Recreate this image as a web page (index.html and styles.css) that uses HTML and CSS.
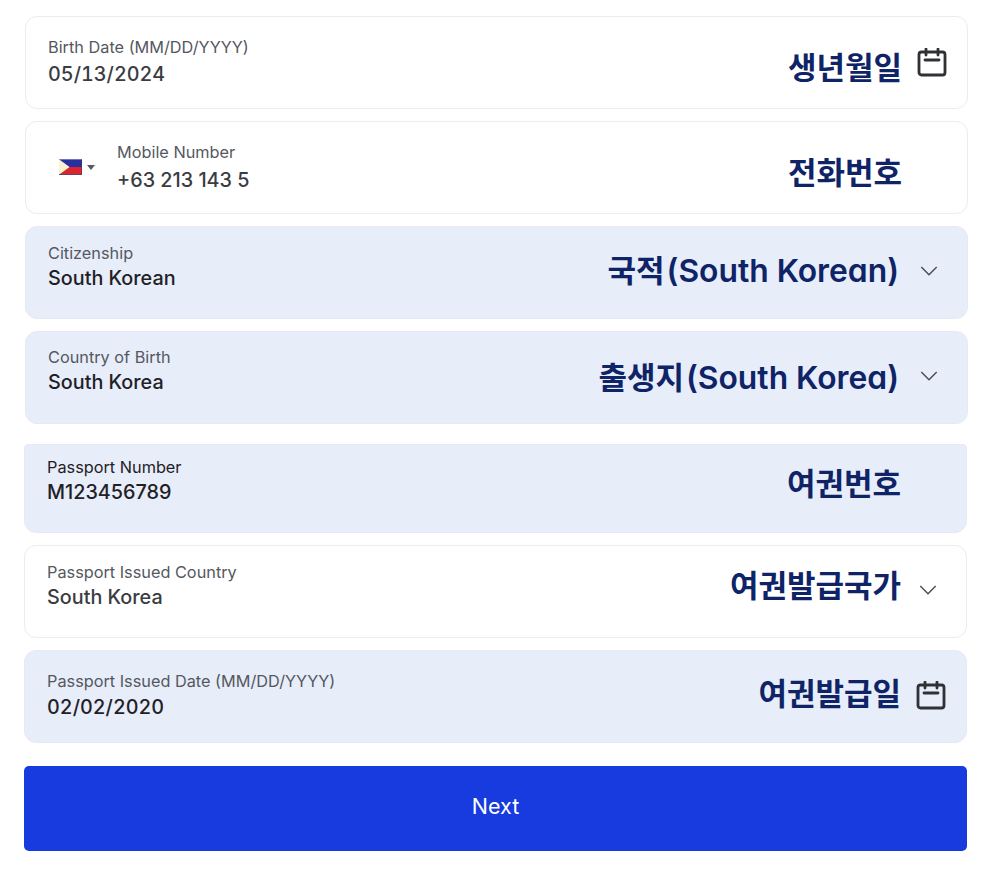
FILE: index.html
```html
<!DOCTYPE html>
<html lang="ko">
<head>
    <meta charset="UTF-8">
    <meta name="viewport" content="width=device-width, initial-scale=1.0">
    <title>Passenger details</title>
    <link rel="stylesheet" href="styles.css">
</head>

<body>
    <div class="wrap">
        <div class="group">
            <div class="field birth">
                <div class="info">
                    <span class="label">Birth Date (MM/DD/YYYY)</span>
                    <span class="value num">05/13/2024</span>
                </div>
                <span class="ko">생년월일</span>
                <div class="icon">
                    <svg class="cal" viewBox="0 0 30 30"><rect x="2" y="4" width="26" height="23" rx="2.5"/><path d="M9 1v6M21 1v6M8 12h14"/></svg>
                </div>
            </div>
            <div class="field phone">
                <div class="flag">
                    <svg class="ph" viewBox="0 0 24 16">
                        <rect width="24" height="8" fill="#2a2f9e"/>
                        <rect y="8" width="24" height="8" fill="#dc2430"/>
                        <path d="M0 0L11 8L0 16Z" fill="#f8f3d0"/>
                        <path d="M24 0V16H0" fill="none" stroke="#4a3a55" stroke-width="1"/>
                    </svg>
                    <span class="caret"></span>
                </div>
                <div class="info">
                    <span class="label">Mobile Number</span>
                    <span class="value">+63 213 143 5</span>
                </div>
                <span class="ko">전화번호</span>
                <div class="icon"></div>
            </div>
            <div class="field blue citizen">
                <div class="info">
                    <span class="label">Citizenship</span>
                    <span class="value dark">South Korean</span>
                </div>
                <span class="ko">국적<span class="latin">(South Korean)</span></span>
                <div class="icon">
                    <svg class="chev" viewBox="0 0 16 10"><path d="M1 1l7 7 7-7"/></svg>
                </div>
            </div>
            <div class="field blue country">
                <div class="info">
                    <span class="label">Country of Birth</span>
                    <span class="value dark">South Korea</span>
                </div>
                <span class="ko">출생지<span class="latin">(South Korea)</span></span>
                <div class="icon">
                    <svg class="chev" viewBox="0 0 16 10"><path d="M1 1l7 7 7-7"/></svg>
                </div>
            </div>
        </div>

        <div class="group lower">
            <div class="field blue passport">
                <div class="info">
                    <span class="label dark">Passport Number</span>
                    <span class="value dark">M123456789</span>
                </div>
                <span class="ko">여권번호</span>
                <div class="icon"></div>
            </div>
            <div class="field issued-country">
                <div class="info">
                    <span class="label">Passport Issued Country</span>
                    <span class="value">South Korea</span>
                </div>
                <span class="ko">여권발급국가</span>
                <div class="icon">
                    <svg class="chev" viewBox="0 0 16 10"><path d="M1 1l7 7 7-7"/></svg>
                </div>
            </div>
            <div class="field blue issued-date">
                <div class="info">
                    <span class="label">Passport Issued Date (MM/DD/YYYY)</span>
                    <span class="value dark num">02/02/2020</span>
                </div>
                <span class="ko">여권발급일</span>
                <div class="icon">
                    <svg class="cal" viewBox="0 0 30 30"><rect x="2" y="4" width="26" height="23" rx="2.5"/><path d="M9 1v6M21 1v6M8 12h14"/></svg>
                </div>
            </div>
            <button class="next">Next</button>
        </div>
    </div>
</body>

</html>
```

FILE: styles.css
```css
body {
    margin: 0;
    background-color: #fff;
    font-family: "Inter", "Noto Sans CJK KR", sans-serif;
}

.wrap {
    padding: 16px 14px 0 25px;
}

.group {
    display: flex;
    flex-direction: column;
    gap: 12px;
}

.lower {
    margin-top: 20px;
    margin-left: -1px;
    margin-right: 1px;
}

.field {
    height: 93px;
    box-sizing: border-box;
    display: flex;
    align-items: flex-start;
    padding-left: 22px;
    background-color: #fff;
    border: 1px solid #ececf0;
    border-radius: 12px;
}

.blue {
    background-color: #e7edf9;
    border-color: #e5eaf6;
}

.info {
    flex: 1;
    display: flex;
    flex-direction: column;
    padding-top: 17px;
}

.label {
    font-size: 16.3px;
    line-height: 19px;
    color: #55585f;
}

.value {
    margin-top: 3px;
    font-size: 19.8px;
    line-height: 24px;
    font-weight: 500;
    color: #3a3c42;
}

.num {
    font-variant-numeric: tabular-nums;
}

.dark {
    color: #1f2126;
}

.ko {
    margin-top: 15px;
    font-family: "Noto Sans CJK KR", sans-serif;
    font-size: 31px;
    line-height: 46px;
    font-weight: 700;
    color: #0f2467;
    white-space: nowrap;
}

.latin {
    margin-left: 2px;
    margin-right: 3px;
    font-family: "Inter", sans-serif;
    font-size: 31.8px;
    font-weight: 600;
    font-feature-settings: "cv11";
}

.icon {
    width: 65px;
    flex: none;
    display: flex;
    justify-content: flex-end;
}

.cal {
    width: 30px;
    height: 30px;
    margin: 31px 20px 0 0;
    fill: none;
    stroke: #2f3134;
    stroke-width: 2.8;
    stroke-linecap: round;
}

.chev {
    width: 18px;
    height: 11px;
    margin: 39px 29px 0 0;
    fill: none;
    stroke: #4a4d55;
    stroke-width: 1.3;
}

/* each row sits a little differently in the card */
.birth .info {
    padding-top: 21px;
}

.birth .value {
    margin-top: 5px;
}

.birth .ko {
    margin-top: 26px;
}

.phone {
    padding-left: 33px;
}

.phone .info {
    padding-top: 21px;
}

.phone .value {
    margin-top: 6px;
}

.phone .ko {
    margin-top: 26px;
}

.citizen .ko {
    margin-top: 19px;
}

.country .info {
    padding-top: 16px;
}

.country .ko {
    margin-top: 21px;
}

.passport {
    height: 89px;
    border-top-left-radius: 4px;
    border-top-right-radius: 4px;
}

.passport .info {
    padding-top: 13px;
}

.passport .ko {
    margin-top: 14px;
}

.issued-date .info {
    padding-top: 21px;
}

.issued-date .value {
    margin-top: 4px;
}

.issued-date .ko {
    margin-top: 18px;
}

.issued-date .cal {
    margin-top: 30px;
}

.flag {
    width: 58px;
    flex: none;
    display: flex;
    align-items: center;
    gap: 5px;
    padding-top: 37px;
}

.ph {
    width: 23px;
    height: 16px;
}

.caret {
    border-left: 4px solid transparent;
    border-right: 4px solid transparent;
    border-top: 5px solid #55585f;
}

.next {
    height: 85px;
    margin-top: 11px;
    padding-bottom: 6px;
    border: 0;
    border-radius: 5px;
    background-color: #173bdf;
    color: #fff;
    font-family: inherit;
    font-size: 21.5px;
    font-weight: 400;
}
```
